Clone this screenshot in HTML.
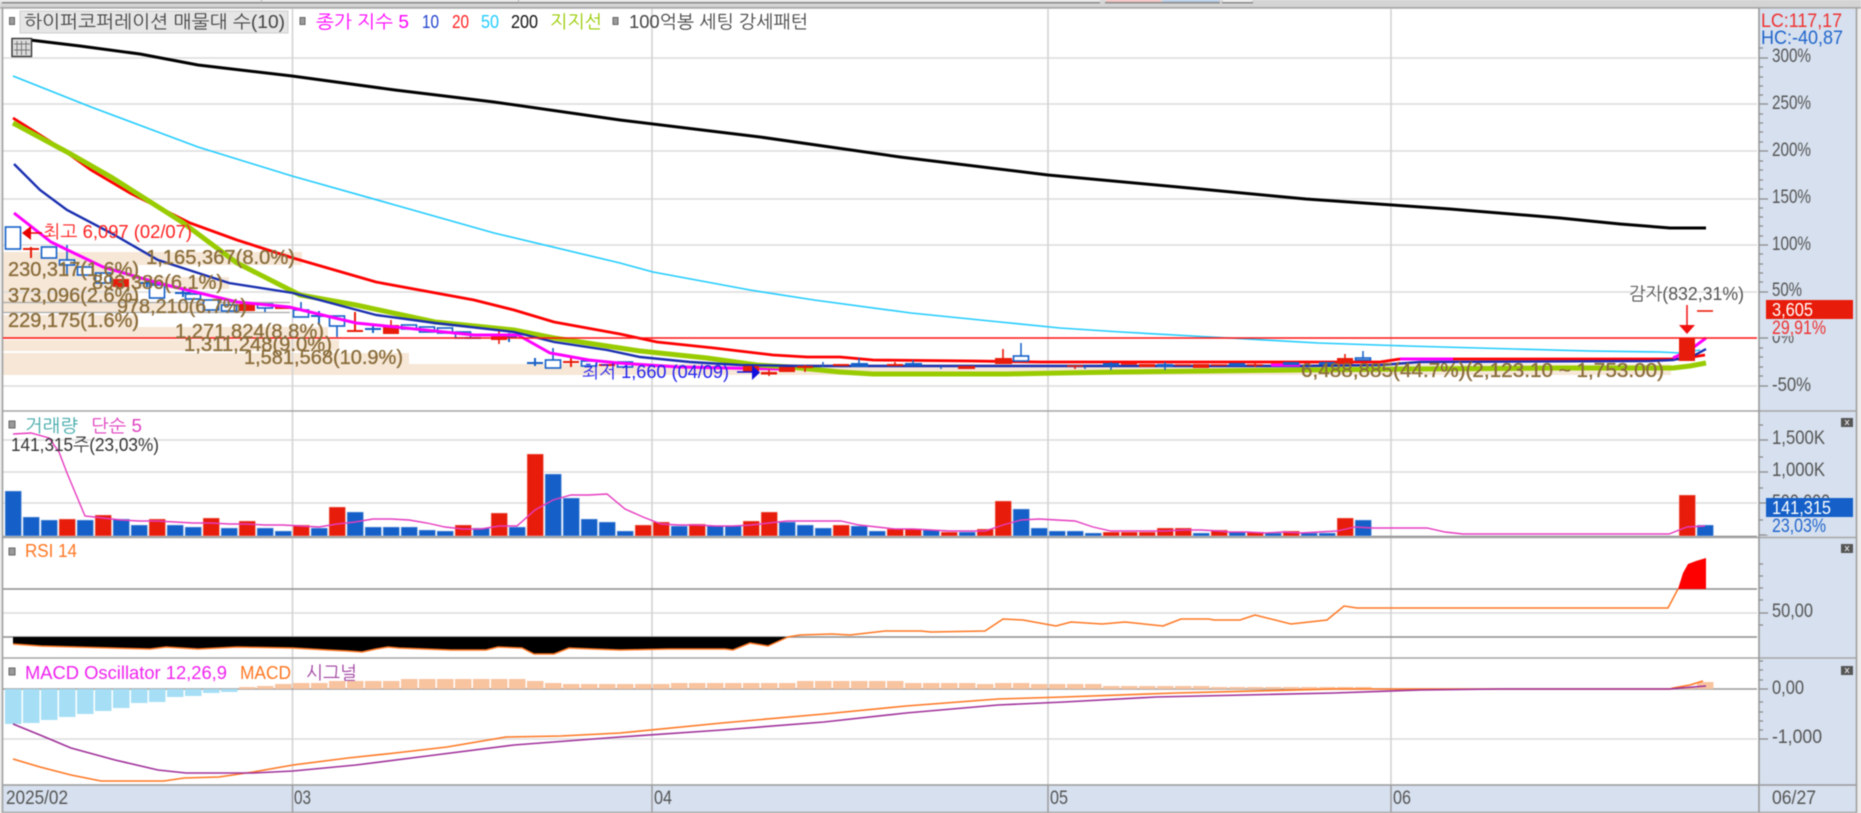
<!DOCTYPE html>
<html lang="ko">
<head>
<meta charset="utf-8">
<title>Chart</title>
<style>
html,body{margin:0;padding:0;width:1861px;height:813px;overflow:hidden;background:#ececec}
svg{display:block;position:absolute;left:0;top:0;filter:blur(.4px)}
text{font-family:"Liberation Sans","NanumGothic","Noto Sans CJK KR",sans-serif;font-size:18px;white-space:pre}
.p{font-size:20px;fill:#8a6d3b;stroke:#8a6d3b;stroke-width:.35px}
.a{fill:#555;font-size:19px}
</style>
</head>
<body>
<svg width="1861" height="813" viewBox="0 0 1861 813" xmlns="http://www.w3.org/2000/svg">
<!-- top strip -->
<rect x="0" y="0" width="1861" height="9" fill="#d4d4d4"/>
<rect x="0" y="0" width="1100" height="2" fill="#e8e8e8"/>
<rect x="2" y="2" width="1098" height="1.5" fill="#8a8a8a"/>
<rect x="261" y="0" width="1" height="3" fill="#aaa"/>
<rect x="518" y="0" width="1" height="3" fill="#aaa"/>
<rect x="1106" y="0" width="55" height="2" fill="#f4c2c0"/><rect x="1105" y="2" width="57" height="1.5" fill="#8a8a8a"/>
<rect x="1163" y="0" width="56" height="2" fill="#b5cdea"/><rect x="1162" y="2" width="58" height="1.5" fill="#8a8a8a"/>
<rect x="1223" y="0" width="29" height="2" fill="#eee"/><rect x="1222" y="2" width="31" height="1.5" fill="#8a8a8a"/>
<rect x="0" y="7" width="1861" height="1.5" fill="#a8a8a8"/>
<!-- panels -->
<rect x="3" y="9" width="1756" height="776" fill="#fff"/>
<rect x="1759" y="9" width="97" height="803" fill="#d6e0ee"/>
<rect x="3" y="785" width="1756" height="27" fill="#d6e0ee"/>
<!-- volume profile bars -->
<g fill="#f6e7d7">
<rect x="3" y="252" width="299" height="13"/>
<rect x="3" y="265" width="135" height="12"/>
<rect x="3" y="277" width="226" height="12"/>
<rect x="3" y="289" width="135" height="13"/>
<rect x="3" y="302" width="250" height="11"/>
<rect x="3" y="315" width="135" height="12"/>
<rect x="3" y="327" width="325" height="11"/>
<rect x="3" y="340" width="336" height="11"/>
<rect x="3" y="353" width="406" height="11"/>
<rect x="3" y="364" width="1668" height="11"/>
</g>
<!-- grid -->
<g stroke="#dcdcdc" stroke-width="1.5" fill="none">
<path d="M3 58H1757M3 104H1757M3 151H1757M3 199H1757M3 245H1757M3 292H1757M3 386H1757"/>
<path d="M3 440H1757M3 472H1757M3 503H1757"/>
<path d="M3 613H1757M3 739H1757"/>
</g>
<g stroke="#d2d2d2" stroke-width="1.5" fill="none">
<path d="M292.5 9V785M652 9V785M1048 9V785M1391 9V785"/>
</g>
<path d="M3 302.5H290M3 312.5H290" stroke="#a9a9a9" stroke-width="1.2" fill="none"/>
<path d="M3 536.5H1757M3 589H1757M3 637H1757" stroke="#8e8e8e" stroke-width="1.5" fill="none"/>
<path d="M3 689H1757" stroke="#9a9a9a" stroke-width="1.5" fill="none"/>
<!-- separators -->
<path d="M3 411H1856M3 537.5H1856M3 658H1856" stroke="#a6a6a6" stroke-width="1.6" fill="none"/>
<path d="M3 785H1856" stroke="#9a9a9a" stroke-width="1.6" fill="none"/>
<path d="M2.5 8V812.5H1856.5V8" stroke="#a0a0a0" stroke-width="1.6" fill="none"/>
<path d="M1759 8V812" stroke="#999" stroke-width="1.6" fill="none"/>
<path d="M292.5 785V812M652 785V812M1048 785V812M1391 785V812" stroke="#9a9a9a" stroke-width="1.4" fill="none"/>

<!-- candles hollow blue -->
<g fill="#fff" stroke="#1560c8" stroke-width="1.6">
<rect x="5.5" y="227" width="15" height="22"/>
<rect x="41.5" y="247" width="15" height="11"/>
<path d="M67 245V275" fill="none"/><rect x="59.5" y="260" width="15" height="5"/>
<rect x="77.5" y="267" width="15" height="8"/>
<rect x="95.5" y="273" width="15" height="10"/>
<rect x="149.5" y="285" width="15" height="13"/>
<rect x="185.5" y="294" width="15" height="5"/>
<rect x="203.5" y="300" width="15" height="10"/>
<rect x="221.5" y="305" width="15" height="6"/>
<path d="M265 304V312" fill="none"/><rect x="257.5" y="304" width="15" height="4"/>
<path d="M301 302V317" fill="none"/><rect x="293.5" y="310" width="15" height="7"/>
<path d="M337 316V337" fill="none"/><rect x="329.5" y="316" width="15" height="10"/>
<rect x="401.5" y="325" width="15" height="4"/>
<rect x="419.5" y="327" width="15" height="5"/>
<rect x="437.5" y="328" width="15" height="5"/>
<rect x="455.5" y="332" width="15" height="6"/>
<path d="M553 348V368" fill="none"/><rect x="545.5" y="360" width="15" height="8"/>
<rect x="581.5" y="361" width="15" height="5"/>
<rect x="617.5" y="362" width="15" height="5"/>
</g>
<!-- early dojis -->
<path fill="none" stroke="#1560c8" stroke-width="2" d="M139 283h16M147 279v8M175 293h16M183 289v8M311 316h16M319 311v14M365 329h16M373 324v9M465 338h16M501 337h16M509 333v9M527 363h16M535 358v8"/>
<path fill="none" stroke="#e81c0a" stroke-width="2" d="M23 249h16M31 247v11M275 308h16M347 331h16M355 312v19M563 362h16M571 357v10M599 365h16"/>
<path fill="#e81c0a" d="M113 279h16v8h-16zM239 304h16v7h-16zM383 325h16v9h-16zM491 335h16v5h-16z"/>
<path fill="none" stroke="#e81c0a" stroke-width="1.6" d="M391 320v5M499 327v17"/>

<!-- volume bars -->
<path fill="#e81c0a" stroke="#f6c8c0" stroke-width=".6" d="M59 519h16.5V536h-16.5zM95 515h16.5V536h-16.5zM149 519h16.5V536h-16.5zM203 518h16.5V536h-16.5zM239 521h16.5V536h-16.5zM293 525h16.5V536h-16.5zM329 507h16.5V536h-16.5zM455 525h16.5V536h-16.5zM491 513h16.5V536h-16.5zM527 454h16.5V536h-16.5zM635 525h16.5V536h-16.5zM653 522h16.5V536h-16.5zM689 524h16.5V536h-16.5zM743 521h16.5V536h-16.5zM761 512h16.5V536h-16.5zM833 525h16.5V536h-16.5zM887 529h16.5V536h-16.5zM905 529h16.5V536h-16.5zM941 532h16.5V536h-16.5zM977 529h16.5V536h-16.5zM995 501h16.5V536h-16.5zM1103 532h16.5V536h-16.5zM1121 532h16.5V536h-16.5zM1139 532h16.5V536h-16.5zM1157 528h16.5V536h-16.5zM1175 528h16.5V536h-16.5zM1211 530h16.5V536h-16.5zM1247 532h16.5V536h-16.5zM1283 531h16.5V536h-16.5zM1337 518h16.5V536h-16.5zM1679 495h16.5V536h-16.5z"/>
<path fill="#1560c8" stroke="#c0d4f0" stroke-width=".6" d="M5 491h16.5V536H5zM23 517h16.5V536H23zM41 520h16.5V536H41zM77 520h16.5V536H77zM113 519h16.5V536H113zM131 525h16.5V536H131zM167 525h16.5V536H167zM185 527h16.5V536H185zM221 528h16.5V536H221zM257 528h16.5V536H257zM275 531h16.5V536H275zM311 528h16.5V536H311zM347 512h16.5V536H347zM365 527h16.5V536H365zM383 527h16.5V536H383zM401 527h16.5V536H401zM419 530h16.5V536H419zM437 531h16.5V536H437zM473 528h16.5V536H473zM509 527h16.5V536H509zM545 474h16.5V536H545zM563 498h16.5V536H563zM581 519h16.5V536H581zM599 522h16.5V536H599zM617 531h16.5V536H617zM671 526h16.5V536H671zM707 526h16.5V536H707zM725 526h16.5V536H725zM779 522h16.5V536H779zM797 525h16.5V536H797zM815 528h16.5V536H815zM851 526h16.5V536H851zM869 531h16.5V536H869zM923 530h16.5V536H923zM959 532h16.5V536H959zM1013 509h16.5V536H1013zM1031 528h16.5V536H1031zM1049 531h16.5V536H1049zM1067 531h16.5V536H1067zM1085 533h16.5V536H1085zM1193 533h16.5V536H1193zM1229 532h16.5V536H1229zM1265 533h16.5V536H1265zM1301 533h16.5V536H1301zM1319 533h16.5V536H1319zM1355 520h16.5V536H1355zM1697 525h16.5V536H1697z"/>
<polyline fill="none" stroke="#e63cc0" stroke-width="1.4" points="13,434 31,433 49,438 59,452 67,473 85,516 103,518 121,520 139,521 157,521 175,522 193,523 211,523 229,524 247,524 265,525 283,525 301,526 319,527 337,524 355,522 373,519 391,519 409,520 427,523 445,527 463,529 481,529 499,526 517,526 535,510 553,500 571,495 589,495 607,494 625,509 643,517 661,524 679,525 697,525 715,526 733,526 751,525 769,523 787,521 805,521 823,521 841,521 859,525 877,527 895,529 913,529 931,530 949,531 967,531 985,531 1003,525 1021,520 1039,519 1057,520 1075,521 1093,527 1111,531 1129,531 1147,531 1165,531 1183,530 1201,530 1219,531 1229,532 1247,532 1265,533 1283,532 1301,533 1319,532 1337,531 1355,527 1373,528 1391,528 1409,528 1427,528 1445,532 1463,534 1669,534 1687,527 1705,526"/>

<!-- RSI -->
<polygon fill="#000" points="13,637 13,644 41,646 77,647 113,648 150,649 166,647 198,649 237,647 293,648 328,650 348,651 362,652 376,649 388,647 399,648 451,650 486,650 498,647 522,648 534,654 554,654 569,648 593,649 620,650 668,649 725,649 733,650 750,643 768,646 788,637"/>
<polygon fill="#ff0000" points="1678,589 1683,573 1688,564 1696,561 1706,558 1706,589"/>
<polyline fill="none" stroke="#ff7722" stroke-width="1.5" points="13,644 41,646 77,647 113,648 150,649 166,647 198,649 237,647 293,648 328,650 348,651 362,652 376,649 388,647 399,648 451,650 486,650 498,647 522,648 534,654 554,654 569,648 593,649 620,650 668,649 725,649 733,650 750,643 768,646 788,637 800,635 832,634 850,635 885,631 921,631 931,632 985,631 1003,619 1023,620 1056,626 1071,622 1102,624 1125,622 1163,626 1181,619 1209,619 1214,620 1240,620 1255,615 1291,624 1327,620 1344,606 1357,608 1668,608 1678,589"/>

<!-- MACD bars -->
<path fill="#a6dff5" d="M5 689h16.5v35H5zM23 689h16.5v34H23zM41 689h16.5v31H41zM59 689h16.5v28H59zM77 689h16.5v25H77zM95 689h16.5v22H95zM113 689h16.5v19H113zM131 689h16.5v14H131zM149 689h16.5v13H149zM167 689h16.5v8H167zM185 689h16.5v7H185zM203 689h16.5v4H203zM221 689h16.5v3H221z"/>
<path fill="#f8c4a0" d="M239 687h16.5v2H239zM257 686h16.5v3H257zM275 684h16.5v5H275zM293 683h16.5v6H293zM311 683h16.5v6H311zM329 681h16.5v8H329zM347 681h16.5v8H347zM365 681h16.5v8H365zM383 681h16.5v8H383zM401 679h16.5v10H401zM419 679h16.5v10H419zM437 679h16.5v10H437zM455 679h16.5v10H455zM473 679h16.5v10H473zM491 679h16.5v10H491zM509 679h16.5v10H509zM527 681h16.5v8H527zM545 683h16.5v6H545zM563 684h16.5v5H563zM581 684h16.5v5H581zM599 684h16.5v5H599zM617 684h16.5v5H617zM635 684h16.5v5H635zM653 684h16.5v5H653zM671 683h16.5v6H671zM689 683h16.5v6H689zM707 683h16.5v6H707zM725 683h16.5v6H725zM743 683h16.5v6H743zM761 683h16.5v6H761zM779 683h16.5v6H779zM797 681h16.5v8H797zM815 681h16.5v8H815zM833 681h16.5v8H833zM851 681h16.5v8H851zM869 681h16.5v8H869zM887 681h16.5v8H887zM905 683h16.5v6H905zM923 683h16.5v6H923zM941 683h16.5v6H941zM959 683h16.5v6H959zM977 684h16.5v5H977zM995 683h16.5v6H995zM1013 683h16.5v6H1013zM1031 684h16.5v5H1031zM1049 684h16.5v5H1049zM1067 684h16.5v5H1067zM1085 684h16.5v5H1085zM1103 686h16.5v3H1103zM1121 686h16.5v3H1121zM1139 686h16.5v3H1139zM1157 686h16.5v3H1157zM1175 686h16.5v3H1175zM1193 686h16.5v3H1193zM1211 687h16.5v2H1211zM1229 687h16.5v2H1229zM1247 687h16.5v2H1247zM1265 687h16.5v2H1265zM1283 687h16.5v2H1283zM1301 687h16.5v2H1301zM1319 687h16.5v2H1319zM1337 687h16.5v2H1337zM1355 687h16.5v2H1355zM1679 687h16.5v2H1679zM1697 682h16.5v7H1697z"/>
<polyline fill="none" stroke="#ff7722" stroke-width="1.6" points="13,759 40,767 71,775 101,781 164,781 184,778 219,777 253,772 293,765 348,758 395,753 447,747 506,737 561,736 620,733 722,723 824,714 906,706 998,699 1064,697 1176,693 1334,689 1420,689 1670,689 1673,688 1690,685 1703,681"/>
<polyline fill="none" stroke="#a0309a" stroke-width="1.6" points="13,724 40,735 71,748 115,760 158,770 186,773 221,773 253,773 293,771 356,765 435,755 514,745 620,737 722,730 824,722 906,713 998,705 1064,702 1156,697 1334,693 1420,690 1500,689 1670,689 1680,688 1706,686"/>

<!-- main lines -->
<polyline fill="none" stroke="#000" stroke-width="3" points="30,40 80,46 140,54 198,65 292,76 395,90 494,102 620,120 760,137 900,157 1048,175 1200,189 1306,199 1450,209 1560,218 1620,224 1670,228 1706,228"/>
<polyline fill="none" stroke="#22ccff" stroke-width="1.6" points="13,76 91,107 198,147 292,176 395,205 494,233 620,263 653,272 750,290 814,300 911,313 1000,322 1060,328 1121,332 1211,337 1318,343 1407,346 1514,349 1590,351 1660,352 1680,353 1700,350"/>
<polyline fill="none" stroke="#ff0000" stroke-width="2.8" points="13,118 59,147 91,170 130,193 190,223 237,240 293,258 376,282 474,300 514,310 554,322 620,334 657,342 714,348 773,355 807,357 840,357 873,360 973,361 1040,362 1380,362 1400,359 1680,359 1705,355"/>
<polyline fill="none" stroke="#ff00ff" stroke-width="3" points="14,213 51,242 103,267 158,283 237,302 289,307 356,323 474,335 518,335 550,353 589,360 618,363 679,367 779,369"/>
<polyline fill="none" stroke="#99cc00" stroke-width="5" points="13,123 67,152 111,177 182,222 237,263 300,295 356,305 435,322 514,330 554,338 620,348 640,351 707,358 757,365 790,367 840,372 873,374 1007,374 1060,373 1120,372 1300,370 1407,369 1560,368 1673,368 1690,366 1706,363"/>
<polyline fill="none" stroke="#1a2fb0" stroke-width="2.4" points="14,164 40,190 67,210 111,233 158,260 229,283 293,293 376,315 435,323 514,332 554,342 607,350 640,357 690,362 740,365 800,366 1300,366 1380,365 1420,362 1650,361 1673,360 1695,355 1706,349"/>
<polyline fill="none" stroke="#ff00ff" stroke-width="3" points="1271,365 1300,365"/>
<polyline fill="none" stroke="#ff00ff" stroke-width="3" points="1400,359 1453,359"/>
<polyline fill="none" stroke="#ff00ff" stroke-width="3" points="1673,358 1690,350 1706,338"/>

<!-- late candles above lines -->
<path fill="#e81c0a" d="M743 366h16v6h-16zM779 367h16v5h-16zM761 372h16v2.500h-16zM797 366h16v2h-16zM833 364h16v2h-16zM887 364h16v2h-16zM958 366h17v3h-17zM995 358h17v6h-17zM1337 358h16v6h-16zM1139 364h16v3h-16zM1193 364h16v4h-16z"/>
<path fill="none" stroke="#e81c0a" stroke-width="1.6" d="M769 370v6M805 365v7M895 362v4M1003 349v9M1345 354v4M1067 366h16M1075 366v3M1121 364h16M1175 365h16M1211 365h16M1247 365h16M1255 362v5"/>
<path fill="#1560c8" d="M851 363h17v4h-17zM905 363h17v3h-17zM1103 363h16v3h-16zM1157 364h16v3h-16zM1229 363h16v3h-16zM1283 362h16v3h-16zM1319 362h16v3h-16z"/>
<path fill="none" stroke="#1560c8" stroke-width="1.5" d="M859 358v5M913 360v3M823 362v5M1021 343v13M1363 351v7M1111 362v8M1165 362v8M941 366v3M1085 366v3"/>
<g fill="#fff" stroke="#1560c8" stroke-width="1.6">
<rect x="1013.5" y="356" width="15" height="5"/>
<rect x="1355.5" y="358" width="15" height="2"/>
</g>
<path d="M3 338H1757" stroke="#ff1111" stroke-width="1.5" fill="none"/>
<rect x="1679" y="338" width="16" height="23" fill="#e81c0a"/>
<path fill="none" stroke="#e81c0a" stroke-width="1.6" d="M1697 311h16"/>

<!-- price labels -->
<text class="p" x="146" y="264" textLength="149" lengthAdjust="spacingAndGlyphs">1,165,367(8.0%)</text>
<text class="p" x="8" y="276" textLength="131" lengthAdjust="spacingAndGlyphs">230,317(1.6%)</text>
<text class="p" x="92" y="289" textLength="131" lengthAdjust="spacingAndGlyphs">893,386(6.1%)</text>
<text class="p" x="8" y="302" textLength="131" lengthAdjust="spacingAndGlyphs">373,096(2.6%)</text>
<text class="p" x="117" y="313" textLength="130" lengthAdjust="spacingAndGlyphs">978,210(6.7%)</text>
<text class="p" x="8" y="327" textLength="131" lengthAdjust="spacingAndGlyphs">229,175(1.6%)</text>
<text class="p" x="175" y="338" textLength="149" lengthAdjust="spacingAndGlyphs">1,271,824(8.8%)</text>
<text class="p" x="184" y="351" textLength="148" lengthAdjust="spacingAndGlyphs">1,311,248(9.0%)</text>
<text class="p" x="244" y="364" textLength="159" lengthAdjust="spacingAndGlyphs">1,581,568(10.9%)</text>
<text class="p" x="1301" y="377" textLength="363" lengthAdjust="spacingAndGlyphs">6,488,885(44.7%)(2,123.10 ~ 1,753.00)</text>

<!-- high/low markers -->
<text x="43" y="238" textLength="149" lengthAdjust="spacingAndGlyphs" fill="#ff2020">최고 6,097 (02/07)</text>
<path d="M22 233l9-7v14z" fill="#e80000"/><path d="M30 233H42" stroke="#e80000" stroke-width="1.5"/>
<text x="582" y="378" textLength="147" lengthAdjust="spacingAndGlyphs" fill="#2222ee">최저 1,660 (04/09)</text>
<path d="M737 372H752" stroke="#1111dd" stroke-width="1.5"/><path d="M752 365l8 7.500-8 7.500z" fill="#1111dd"/>
<text x="1629" y="300" textLength="115" lengthAdjust="spacingAndGlyphs" fill="#555">감자(832,31%)</text>
<path d="M1687 305V326" stroke="#f01010" stroke-width="1.5"/><path d="M1679 325h16l-8 9z" fill="#f01010"/>

<!-- top legend -->
<rect x="20" y="11" width="268" height="22" fill="#e6e6e6" stroke="#cfcfcf"/>
<g fill="#9a9a9a" stroke="#666" stroke-width="1">
<rect x="9.500" y="17.500" width="5" height="7"/>
<rect x="300" y="17.500" width="5" height="7"/>
<rect x="613" y="17.500" width="5" height="7"/>
<rect x="9" y="421" width="6" height="7"/>
<rect x="9" y="548" width="6" height="7"/>
<rect x="9" y="668" width="6" height="7"/>
</g>
<text x="24" y="28" textLength="261" lengthAdjust="spacingAndGlyphs" fill="#444">하이퍼코퍼레이션 매물대 수(10)</text>
<text x="316" y="28" textLength="93" lengthAdjust="spacingAndGlyphs" fill="#ff00ff">종가 지수 5</text>
<text x="422" y="28" textLength="17" lengthAdjust="spacingAndGlyphs" fill="#2244cc">10</text>
<text x="452" y="28" textLength="17" lengthAdjust="spacingAndGlyphs" fill="#ff2222">20</text>
<text x="481" y="28" textLength="18" lengthAdjust="spacingAndGlyphs" fill="#22ccff">50</text>
<text x="511" y="28" textLength="27" lengthAdjust="spacingAndGlyphs" fill="#111">200</text>
<text x="550" y="28" textLength="52" lengthAdjust="spacingAndGlyphs" fill="#99cc00">지지선</text>
<text x="629" y="28" textLength="179" lengthAdjust="spacingAndGlyphs" fill="#444">100억봉 세팅 강세패턴</text>
<!-- table icon -->
<rect x="12" y="38.500" width="19.500" height="18" fill="#ddd" stroke="#333" stroke-width="1.4"/>
<path d="M14 44H30M14 50H30M17 41V55M21.500 41V55M26 41V55" stroke="#777" stroke-width="1" fill="none"/>

<!-- pane titles -->
<text x="25" y="432" textLength="53" lengthAdjust="spacingAndGlyphs" fill="#44aaaa">거래량</text>
<text x="91" y="432" textLength="51" lengthAdjust="spacingAndGlyphs" fill="#e040c0">단순 5</text>
<text x="11" y="451" textLength="148" lengthAdjust="spacingAndGlyphs" fill="#333">141,315주(23,03%)</text>
<text x="25" y="557" textLength="52" lengthAdjust="spacingAndGlyphs" fill="#ff7722">RSI 14</text>
<text x="25" y="679" textLength="202" lengthAdjust="spacingAndGlyphs" fill="#ee22ee">MACD Oscillator 12,26,9</text>
<text x="240" y="679" textLength="51" lengthAdjust="spacingAndGlyphs" fill="#ff7722">MACD</text>
<text x="306" y="679" textLength="51" lengthAdjust="spacingAndGlyphs" fill="#a040a0">시그널</text>

<!-- right axis -->
<path stroke="#8a8a8a" stroke-width="1.2" fill="none" d="M1759 58h9M1759 104h9M1759 151h9M1759 199h9M1759 245h9M1759 292h9M1759 338h9M1759 386h9M1759 48h4M1759 67h4M1759 77h4M1759 86h4M1759 95h4M1759 114h4M1759 123h4M1759 132h4M1759 142h4M1759 161h4M1759 170h4M1759 180h4M1759 189h4M1759 208h4M1759 217h4M1759 226h4M1759 236h4M1759 254h4M1759 264h4M1759 273h4M1759 282h4M1759 348h4M1759 357h4M1759 367h4M1759 376h4M1759 440h9M1759 472h9M1759 503h9M1759 535h9M1759 425h4M1759 457h4M1759 488h4M1759 520h4M1759 613h9M1759 564h4M1759 576h4M1759 588h4M1759 600h4M1759 625h4M1759 689h9M1759 739h9M1759 661h4M1759 670h4M1759 680h4M1759 702h4M1759 712h4M1759 721h4M1759 730h4"/>
<text x="1761" y="27" textLength="81" lengthAdjust="spacingAndGlyphs" fill="#ee3333" style="font-size:19px">LC:117,17</text>
<text x="1761" y="44" textLength="82" lengthAdjust="spacingAndGlyphs" fill="#2266cc" style="font-size:19px">HC:-40,87</text>
<text class="a" x="1772" y="62" textLength="39" lengthAdjust="spacingAndGlyphs">300%</text>
<text class="a" x="1772" y="109" textLength="39" lengthAdjust="spacingAndGlyphs">250%</text>
<text class="a" x="1772" y="156" textLength="39" lengthAdjust="spacingAndGlyphs">200%</text>
<text class="a" x="1772" y="203" textLength="39" lengthAdjust="spacingAndGlyphs">150%</text>
<text class="a" x="1772" y="250" textLength="39" lengthAdjust="spacingAndGlyphs">100%</text>
<text class="a" x="1772" y="296" textLength="30" lengthAdjust="spacingAndGlyphs">50%</text>
<text class="a" x="1772" y="343" textLength="22" lengthAdjust="spacingAndGlyphs">0%</text>
<text class="a" x="1772" y="391" textLength="39" lengthAdjust="spacingAndGlyphs">-50%</text>
<rect x="1766" y="319" width="87" height="17" fill="#d6e0ee"/>
<rect x="1766" y="300" width="87" height="19" fill="#e81c0a"/>
<text x="1772" y="316" textLength="41" lengthAdjust="spacingAndGlyphs" fill="#fff">3,605</text>
<text x="1772" y="334" textLength="54" lengthAdjust="spacingAndGlyphs" fill="#ee3333" style="font-size:19px">29,91%</text>

<text class="a" x="1772" y="444" textLength="53" lengthAdjust="spacingAndGlyphs">1,500K</text>
<text class="a" x="1772" y="476" textLength="53" lengthAdjust="spacingAndGlyphs">1,000K</text>
<text class="a" x="1772" y="508" textLength="58" lengthAdjust="spacingAndGlyphs">500,000</text>
<rect x="1766" y="517" width="87" height="18" fill="#d6e0ee"/>
<rect x="1766" y="498" width="87" height="19" fill="#1560c8"/>
<text x="1772" y="514" textLength="59" lengthAdjust="spacingAndGlyphs" fill="#fff">141,315</text>
<text x="1772" y="532" textLength="54" lengthAdjust="spacingAndGlyphs" fill="#2266cc" style="font-size:19px">23,03%</text>
<text class="a" x="1772" y="617" textLength="41" lengthAdjust="spacingAndGlyphs">50,00</text>
<text class="a" x="1772" y="694" textLength="32" lengthAdjust="spacingAndGlyphs">0,00</text>
<text class="a" x="1772" y="743" textLength="50" lengthAdjust="spacingAndGlyphs">-1,000</text>

<!-- pane close icons -->
<g>
<rect x="1841" y="418" width="12" height="9" fill="#555"/><path d="M1845 420l4 5M1849 420l-4 5" stroke="#eee" stroke-width="1"/>
<rect x="1841" y="544" width="12" height="9" fill="#555"/><path d="M1845 546l4 5M1849 546l-4 5" stroke="#eee" stroke-width="1"/>
<rect x="1841" y="666" width="12" height="9" fill="#555"/><path d="M1845 668l4 5M1849 668l-4 5" stroke="#eee" stroke-width="1"/>
</g>

<!-- time axis -->
<text class="a" x="6" y="804" textLength="62" lengthAdjust="spacingAndGlyphs">2025/02</text>
<text class="a" x="294" y="804" textLength="17" lengthAdjust="spacingAndGlyphs">03</text>
<text class="a" x="654" y="804" textLength="18" lengthAdjust="spacingAndGlyphs">04</text>
<text class="a" x="1050" y="804" textLength="18" lengthAdjust="spacingAndGlyphs">05</text>
<text class="a" x="1393" y="804" textLength="18" lengthAdjust="spacingAndGlyphs">06</text>
<text class="a" x="1772" y="804" textLength="44" lengthAdjust="spacingAndGlyphs">06/27</text>
</svg>
</body>
</html>
